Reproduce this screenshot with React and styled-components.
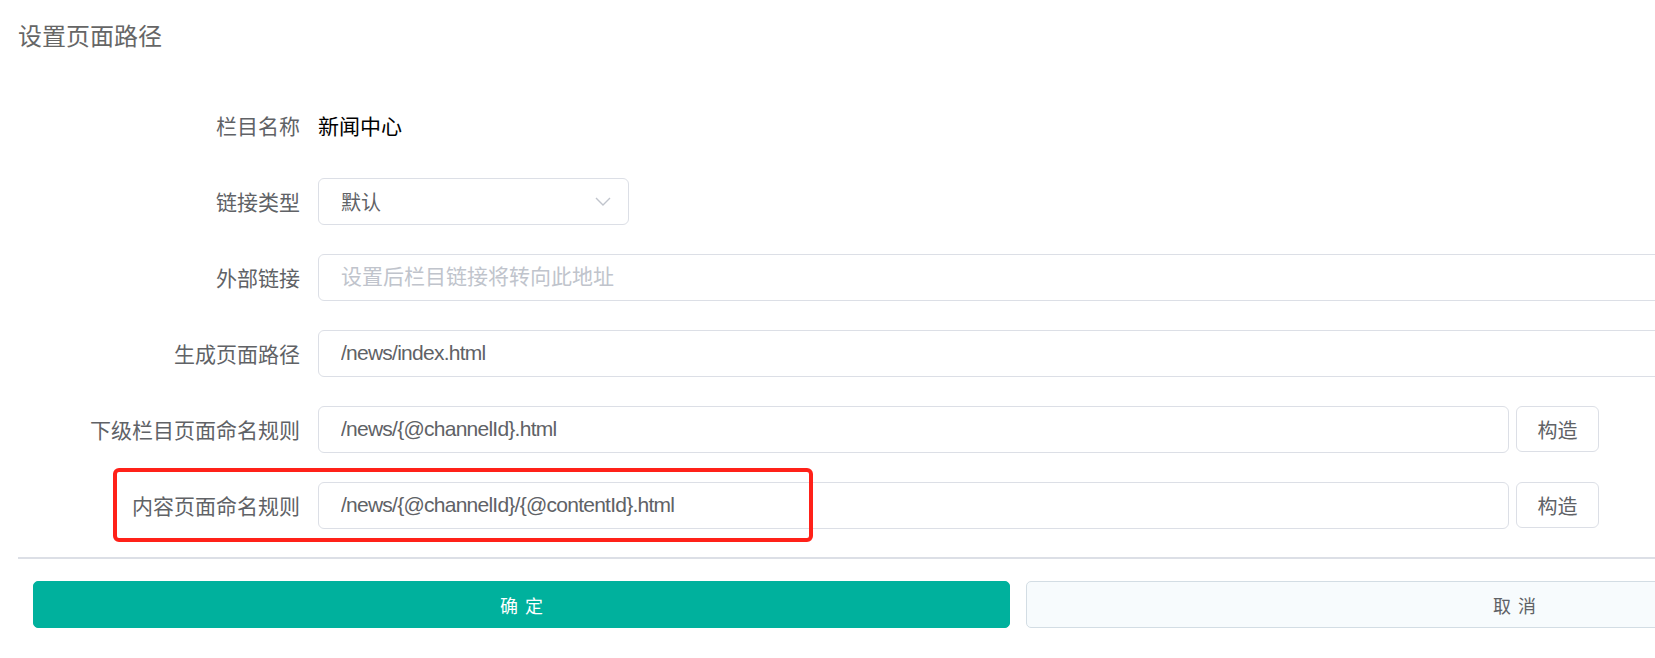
import * as React from "react";
import styled, { createGlobalStyle } from "styled-components";

const GlobalStyle = createGlobalStyle`
  * { box-sizing: border-box; }
  body {
    margin: 0;
    background: #fff;
    overflow: hidden;
    font-family: "Liberation Sans", "Noto Sans CJK SC", sans-serif;
  }
`;

const rows = [
  { label: "链接类型", kind: "select", value: "默认" },
  { label: "外部链接", kind: "input", placeholder: "设置后栏目链接将转向此地址" },
  { label: "生成页面路径", kind: "input", value: "/news/index.html" },
  { label: "下级栏目页面命名规则", kind: "build", value: "/news/{@channelId}.html" },
  {
    label: "内容页面命名规则",
    kind: "build",
    value: "/news/{@channelId}/{@contentId}.html",
    marked: true,
  },
];

export default function App() {
  return (
    <Page>
      <GlobalStyle />
      <Title>设置页面路径</Title>
      <Form>
        <Row>
          <Label>栏目名称</Label>
          <Value>新闻中心</Value>
        </Row>
        {rows.map((r) => (
          <Row key={r.label}>
            <Label>{r.label}</Label>
            {r.kind === "select" && (
              <Select>
                <span>{r.value}</span>
                <svg width="16" height="9" viewBox="0 0 16 9">
                  <polyline
                    points="1,1 8,8 15,1"
                    fill="none"
                    stroke="#c0c4cc"
                    strokeWidth="1.4"
                  />
                </svg>
              </Select>
            )}
            {r.kind === "input" && (
              <Input
                $width="1720px"
                readOnly
                value={r.value || ""}
                placeholder={r.placeholder}
              />
            )}
            {r.kind === "build" && (
              <Group>
                <Input $width="1191px" readOnly value={r.value} />
                <SmallButton>构造</SmallButton>
              </Group>
            )}
            {r.marked && <Mark />}
          </Row>
        ))}
      </Form>
      <Divider />
      <Footer>
        <Button $primary>确 定</Button>
        <Button>取 消</Button>
      </Footer>
    </Page>
  );
}

const Page = styled.div`
  width: 2040px;
`;

const Title = styled.h2`
  margin: 0;
  padding: 25px 18px 0;
  font-size: 24px;
  line-height: 24px;
  font-weight: normal;
  color: #666;
`;

const Form = styled.div`
  display: flex;
  flex-direction: column;
  gap: 28px;
  margin-top: 52px;
  padding-left: 18px;
`;

const Row = styled.div`
  position: relative;
  display: flex;
  align-items: center;
  height: 48px;
`;

const Label = styled.div`
  width: 300px;
  padding-right: 18px;
  text-align: right;
  font-size: 21px;
  color: #606266;
  white-space: nowrap;
`;

const Value = styled.div`
  font-size: 21px;
  color: #000;
`;

const Input = styled.input`
  width: ${(p) => p.$width};
  height: 47px;
  padding: 0 22px;
  border: 1px solid #dcdfe6;
  border-radius: 6px;
  outline: none;
  font-family: inherit;
  font-size: 21px;
  letter-spacing: -0.75px;
  color: #606266;
  background: #fff;

  &::placeholder {
    color: #c0c4cc;
    letter-spacing: 0;
  }
`;

const Select = styled.div`
  display: flex;
  align-items: center;
  justify-content: space-between;
  width: 311px;
  height: 47px;
  padding: 0 17px 0 22px;
  border: 1px solid #dcdfe6;
  border-radius: 6px;
  font-size: 20px;
  color: #606266;
`;

const Group = styled.div`
  display: flex;
  align-items: center;
  gap: 7px;
`;

const SmallButton = styled.button`
  width: 83px;
  height: 46px;
  border: 1px solid #dcdfe6;
  border-radius: 6px;
  background: #fff;
  font-family: inherit;
  font-size: 20px;
  color: #606266;
`;

const Mark = styled.div`
  position: absolute;
  left: 95px;
  top: -13px;
  width: 700px;
  height: 74px;
  border: 4px solid #ff2119;
  border-radius: 6px;
  pointer-events: none;
`;

const Divider = styled.div`
  height: 2px;
  margin: 28px 0 0 18px;
  background: #dcdfe6;
`;

const Footer = styled.div`
  display: flex;
  gap: 16px;
  padding: 22px 0 0 33px;
`;

const Button = styled.button`
  width: 977px;
  height: 47px;
  border-radius: 5px;
  border: 1px solid ${(p) => (p.$primary ? "#00b19d" : "#d3dde4")};
  background: ${(p) => (p.$primary ? "#00b19d" : "#f7fbfd")};
  color: ${(p) => (p.$primary ? "#fff" : "#606266")};
  font-family: inherit;
  font-size: 18px;
  word-spacing: 2px;
`;
